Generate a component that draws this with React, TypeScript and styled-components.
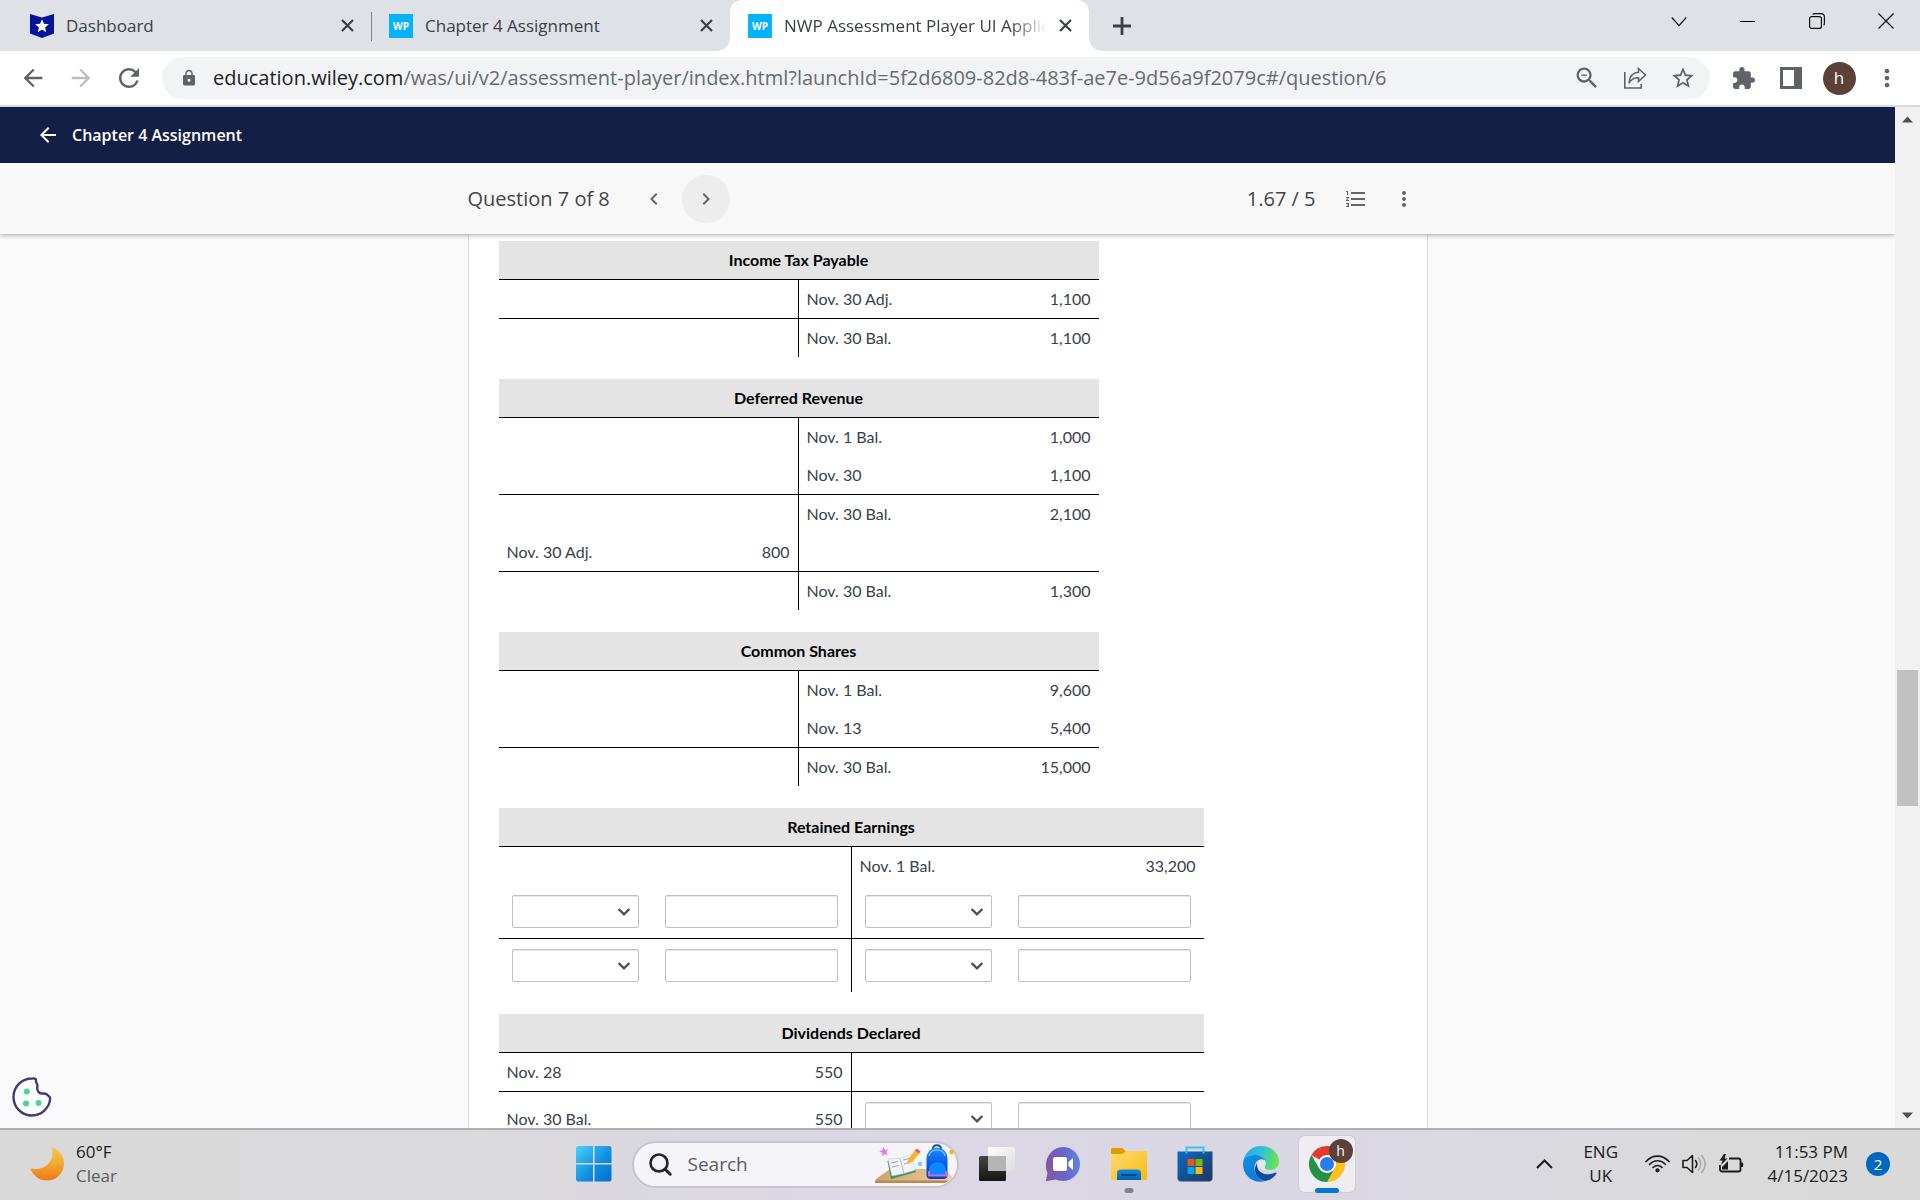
import React from "react";
import styled, { createGlobalStyle, css } from "styled-components";
import {
  MdArrowBack,
  MdArrowForward,
  MdRefresh,
  MdLock,
  MdZoomOut,
  MdStarBorder,
  MdExtension,
  MdMoreVert,
  MdChevronLeft,
  MdChevronRight,
  MdFormatListNumbered,
} from "react-icons/md";

const uiFont = `"Open Sans", "Noto Sans", sans-serif`;
const bodyFont = `Lato, "Open Sans", sans-serif`;

const GlobalStyle = createGlobalStyle`
  *, *::before, *::after { box-sizing: border-box; }
  body { margin: 0; font-family: ${uiFont}; }
  button, input, select { font: inherit; color: inherit; }
`;

const Screen = styled.div`
  display: flex;
  flex-direction: column;
  height: 100vh;
  overflow: hidden;
  background: #fff;
`;

const PlainButton = styled.button`
  display: flex;
  align-items: center;
  justify-content: center;
  flex: none;
  padding: 0;
  border: 0;
  background: none;
`;

/* ---------- browser tabs ---------- */

const TabStrip = styled.div`
  display: flex;
  flex: none;
  height: 51px;
  padding-left: 12px;
  background: #dee1e6;
`;

const Tab = styled.div<{ $active?: boolean; $divider?: boolean }>`
  position: relative;
  display: flex;
  align-items: center;
  flex: 0 1 359px;
  min-width: 0;
  padding: 0 12px 0 18px;
  color: #3c4043;
  ${(p) =>
    p.$divider &&
    css`
      &::after {
        content: "";
        position: absolute;
        right: -1px;
        top: 12px;
        width: 1px;
        height: 29px;
        background: #808489;
      }
    `}
  ${(p) =>
    p.$active &&
    css`
      background: #fff;
      border-radius: 12px 12px 0 0;
      &::before,
      &::after {
        content: "";
        position: absolute;
        bottom: 0;
        width: 12px;
        height: 12px;
      }
      &::before {
        left: -12px;
        background: radial-gradient(circle at 0 0, transparent 11px, #fff 12px);
      }
      &::after {
        right: -12px;
        background: radial-gradient(circle at 100% 0, transparent 11px, #fff 12px);
      }
    `}
`;

const TabTitle = styled.button<{ $fade?: boolean }>`
  flex: 1;
  min-width: 0;
  margin: 0 6px 0 12px;
  padding: 0;
  border: 0;
  background: none;
  font-size: 17px;
  line-height: 24px;
  text-align: left;
  white-space: nowrap;
  overflow: hidden;
  ${(p) =>
    p.$fade &&
    css`
      mask-image: linear-gradient(90deg, #000 calc(100% - 36px), transparent);
    `}
`;

const TabClose = styled(PlainButton)`
  width: 24px;
  height: 24px;
  color: #3c4043;
`;

const WpIcon = styled.span`
  display: flex;
  align-items: center;
  justify-content: center;
  flex: none;
  width: 24px;
  height: 24px;
  background: #06b1ff;
  color: #fff;
  font: 700 10px/24px "Open Sans", sans-serif;
`;

const NewTab = styled(PlainButton)`
  width: 42px;
  margin-left: 12px;
  color: #3c4043;
`;

const WindowControls = styled.div`
  display: flex;
  margin-left: auto;
  height: 42px;
`;

const WindowButton = styled(PlainButton)`
  width: 69px;
`;

/* ---------- address bar ---------- */

const Toolbar = styled.div`
  display: flex;
  align-items: center;
  flex: none;
  height: 56px;
  padding: 0 9px;
  background: #fff;
  border-bottom: 2px solid #d9dadd;
`;

const ToolButton = styled(PlainButton)<{ $dim?: boolean }>`
  width: 48px;
  height: 42px;
  color: ${(p) => (p.$dim ? "#bcbec1" : "#5f6368")};
`;

const AddressPill = styled.div`
  display: flex;
  align-items: center;
  flex: 1;
  min-width: 0;
  height: 42px;
  margin: 0 9px;
  padding: 0 3px 0 18px;
  border-radius: 21px;
  background: #f1f3f4;
  color: #5f6368;
`;

const Address = styled.div`
  flex: 1;
  min-width: 0;
  margin-left: 15px;
  font-size: 20px;
  line-height: 28px;
  color: #676b70;
  white-space: nowrap;
  overflow: hidden;
  b {
    font-weight: 400;
    color: #202124;
  }
`;

const Avatar = styled.span<{ $small?: boolean }>`
  display: flex;
  align-items: center;
  justify-content: center;
  width: ${(p) => (p.$small ? 24 : 33)}px;
  height: ${(p) => (p.$small ? 24 : 33)}px;
  border-radius: 50%;
  background: #5d4037;
  color: #fff;
  font-size: ${(p) => (p.$small ? 14 : 17)}px;
  line-height: 24px;
`;

/* ---------- page ---------- */

const Viewport = styled.div`
  display: flex;
  flex: 1;
  min-height: 0;
`;

const Page = styled.div`
  position: relative;
  display: flex;
  flex-direction: column;
  flex: 1;
  min-width: 0;
  overflow: hidden;
  background: #fafafa;
`;

const CourseBar = styled.header`
  display: flex;
  align-items: center;
  flex: none;
  height: 56px;
  padding-left: 36px;
  background: #131f45;
  color: #fff;
`;

const CourseTitle = styled.h1`
  margin: 0 0 0 12px;
  font-size: 16px;
  line-height: 24px;
  font-weight: 600;
`;

const QuestionBar = styled.div`
  position: relative;
  z-index: 1;
  flex: none;
  background: #f8f8f8;
  box-shadow: 0 1px 5px rgba(0, 0, 0, 0.35);
`;

const QuestionBarInner = styled.div`
  display: flex;
  align-items: center;
  max-width: 960px;
  height: 71px;
  margin: 0 auto;
  color: #444;
  font-size: 20px;
  line-height: 28px;
`;

const Pager = styled.div`
  display: flex;
  gap: 4px;
  margin-left: 20px;
`;

const RoundButton = styled(PlainButton)<{ $filled?: boolean }>`
  width: 48px;
  height: 48px;
  border-radius: 50%;
  background: ${(p) => (p.$filled ? "#ededed" : "none")};
  color: #666;
`;

const Score = styled.span`
  margin-left: auto;
  margin-right: 16px;
`;

const Scroller = styled.main`
  flex: 1;
  min-height: 0;
  overflow: hidden;
`;

const Sheet = styled.div`
  display: flex;
  flex-direction: column;
  align-items: flex-start;
  gap: 22px;
  max-width: 960px;
  margin: 0 auto;
  padding: 7px 30px 30px;
  background: #fff;
  border: solid #dcdcdc;
  border-width: 0 1px;
`;

const Account = styled.table<{ $wide?: boolean }>`
  width: ${(p) => (p.$wide ? 705 : 600)}px;
  table-layout: fixed;
  border-spacing: 0;
  font-family: ${bodyFont};
  font-size: 16px;
  line-height: 22px;
  color: #37424a;
`;

const AccountName = styled.th`
  height: 39px;
  padding: 8px;
  background: #e4e4e4;
  border-bottom: 1px solid #000;
  color: #000;
  font-weight: 700;
`;

const Cell = styled.td<{ $ruled?: boolean; $amount?: boolean; $stem?: boolean }>`
  height: ${(p) => (p.$ruled ? 39 : 38)}px;
  padding: 8px;
  text-align: ${(p) => (p.$amount ? "right" : "left")};
  border: 0 solid #000;
  border-bottom-width: ${(p) => (p.$ruled ? 1 : 0)}px;
  border-right-width: ${(p) => (p.$stem ? 1 : 0)}px;
`;

const FieldCell = styled(Cell)`
  padding: 10px 13px;
`;

const fieldBox = css`
  display: block;
  width: 100%;
  height: 33px;
  padding: 0 8px;
  border: 1px solid #bfc0c2;
  border-radius: 2px;
  background: #fff;
  box-shadow: inset 0 1px 1px rgba(0, 0, 0, 0.1);
`;

const AmountInput = styled.input`
  ${fieldBox}
`;

const Picker = styled.span`
  display: grid;
  align-items: center;
  > * {
    grid-area: 1 / 1;
  }
  svg {
    justify-self: end;
    margin-right: 8px;
    pointer-events: none;
  }
`;

const PickerSelect = styled.select`
  ${fieldBox}
  appearance: none;
`;

const CookieButton = styled(PlainButton)`
  position: absolute;
  left: 12px;
  bottom: 11px;
  width: 40px;
  height: 40px;
`;

const Scrollbar = styled.div`
  display: grid;
  grid-template-rows: 25px 538fr 136fr 297fr 25px;
  flex: none;
  width: 25px;
  background: #f1f1f1;
`;

const ScrollArrow = styled(PlainButton)<{ $down?: boolean }>`
  grid-row: ${(p) => (p.$down ? 5 : 1)};
`;

const ScrollThumb = styled.div`
  grid-row: 3;
  margin: 0 2px;
  background: #c1c1c1;
`;

/* ---------- taskbar ---------- */

const Taskbar = styled.footer`
  display: grid;
  grid-template-columns: 1fr auto 1fr;
  flex: none;
  height: 72px;
  padding-bottom: 2px;
  border-top: 2px solid #b0afb4;
  background: linear-gradient(90deg, #d9d9d9 0, #dad9dc 25%, #dbd7e4 45%, #dad7e4 68%, #dadadb 88%, #d9d9d9 100%);
  color: #1b1b1b;
  font-size: 17px;
  line-height: 24px;
`;

const Weather = styled.div`
  display: flex;
  align-items: center;
  gap: 12px;
  padding-left: 30px;
`;

const Muted = styled.div`
  color: #5c5c5c;
`;

const Apps = styled.div`
  display: flex;
  align-items: center;
  gap: 10px;
`;

const AppTile = styled(PlainButton)<{ $active?: boolean }>`
  position: relative;
  width: 56px;
  height: 56px;
  border-radius: 6px;
  ${(p) => p.$active && "background: #efecf4; box-shadow: 0 0 0 1px #cfccd8;"}
`;

const Running = styled.span<{ $active?: boolean }>`
  position: absolute;
  bottom: -1px;
  left: 50%;
  width: ${(p) => (p.$active ? 24 : 9)}px;
  height: 5px;
  border-radius: 3px;
  background: ${(p) => (p.$active ? "#0078d7" : "#84818b")};
  transform: translateX(-50%);
`;

const Badge = styled.span`
  position: absolute;
  top: 3px;
  right: 2px;
`;

const SearchPill = styled.label`
  display: flex;
  align-items: center;
  width: 327px;
  height: 47px;
  padding: 0 3px 0 15px;
  border: 2px solid #c6c4ce;
  border-radius: 24px;
  background: #f5f4f8;
`;

const SearchInput = styled.input`
  flex: 1;
  min-width: 0;
  margin-left: 16px;
  padding: 0;
  border: 0;
  background: none;
  font-size: 19px;
  line-height: 28px;
  &::placeholder {
    color: #5c5b60;
    opacity: 1;
  }
`;

const Tray = styled.div`
  display: flex;
  align-items: center;
  justify-content: flex-end;
  padding-right: 30px;
`;

const Language = styled.div`
  margin: 0 27px 0 30px;
  text-align: center;
`;

const TrayIcons = styled.div`
  display: flex;
  gap: 12px;
`;

const Clock = styled.div`
  width: 88px;
  margin: 0 18px 0 16px;
  text-align: right;
  white-space: nowrap;
`;

const Notices = styled(PlainButton)`
  width: 24px;
  height: 24px;
  border-radius: 50%;
  background: #0067c0;
  color: #fff;
  font-size: 15px;
`;

/* ---------- data ---------- */

type Side = [string, string] | "fields" | null;
type Entry = { left: Side; right: Side; ruled?: boolean };
type Ledger = { name: string; wide?: boolean; entries: Entry[] };

const ledgers: Ledger[] = [
  {
    name: "Income Tax Payable",
    entries: [
      { left: null, right: ["Nov. 30 Adj.", "1,100"], ruled: true },
      { left: null, right: ["Nov. 30 Bal.", "1,100"] },
    ],
  },
  {
    name: "Deferred Revenue",
    entries: [
      { left: null, right: ["Nov. 1 Bal.", "1,000"] },
      { left: null, right: ["Nov. 30", "1,100"], ruled: true },
      { left: null, right: ["Nov. 30 Bal.", "2,100"] },
      { left: ["Nov. 30 Adj.", "800"], right: null, ruled: true },
      { left: null, right: ["Nov. 30 Bal.", "1,300"] },
    ],
  },
  {
    name: "Common Shares",
    entries: [
      { left: null, right: ["Nov. 1 Bal.", "9,600"] },
      { left: null, right: ["Nov. 13", "5,400"], ruled: true },
      { left: null, right: ["Nov. 30 Bal.", "15,000"] },
    ],
  },
  {
    name: "Retained Earnings",
    wide: true,
    entries: [
      { left: null, right: ["Nov. 1 Bal.", "33,200"] },
      { left: "fields", right: "fields", ruled: true },
      { left: "fields", right: "fields" },
    ],
  },
  {
    name: "Dividends Declared",
    wide: true,
    entries: [
      { left: ["Nov. 28", "550"], right: null, ruled: true },
      { left: ["Nov. 30 Bal.", "550"], right: "fields" },
    ],
  },
];

function SideCells({ side, stem, ruled, label }: { side: Side; stem?: boolean; ruled?: boolean; label: string }) {
  if (side === "fields") {
    return (
      <>
        <FieldCell $ruled={ruled}>
          <Picker>
            <PickerSelect aria-label={`${label} date`}>
              <option value="" />
              <option>Nov. 30</option>
              <option>Nov. 30 Bal.</option>
            </PickerSelect>
            <svg width="14" height="10" viewBox="0 0 14 10">
              <path d="M1.6 2l5.4 5.4L12.4 2" fill="none" stroke="#505050" strokeWidth="2.4" />
            </svg>
          </Picker>
        </FieldCell>
        <FieldCell $ruled={ruled} $stem={stem}>
          <AmountInput aria-label={`${label} amount`} />
        </FieldCell>
      </>
    );
  }
  return (
    <>
      <Cell $ruled={ruled}>{side?.[0]}</Cell>
      <Cell $ruled={ruled} $amount $stem={stem}>
        {side?.[1]}
      </Cell>
    </>
  );
}

function AccountTable({ ledger }: { ledger: Ledger }) {
  const columns = ledger.wide ? [153, 200, 153, 199] : [150, 150, 150, 150];
  return (
    <Account $wide={ledger.wide}>
      <colgroup>
        {columns.map((width, i) => (
          <col key={i} style={{ width }} />
        ))}
      </colgroup>
      <thead>
        <tr>
          <AccountName colSpan={4}>{ledger.name}</AccountName>
        </tr>
      </thead>
      <tbody>
        {ledger.entries.map((e, i) => (
          <tr key={i}>
            <SideCells side={e.left} stem ruled={e.ruled} label={`${ledger.name} debit ${i}`} />
            <SideCells side={e.right} ruled={e.ruled} label={`${ledger.name} credit ${i}`} />
          </tr>
        ))}
      </tbody>
    </Account>
  );
}

/* ---------- drawings ---------- */

const CrossIcon = () => (
  <svg width="13" height="13" viewBox="0 0 13 13">
    <path d="M1 1l11 11M12 1L1 12" stroke="#3c4043" strokeWidth="2.200" />
  </svg>
);

const PlusIcon = () => (
  <svg width="18" height="18" viewBox="0 0 18 18">
    <path d="M9 0v18M0 9h18" stroke="#3c4043" strokeWidth="2.800" />
  </svg>
);

const DashboardIcon = () => (
  <svg width="24" height="24" viewBox="0 0 24 24">
    <path d="M0 0l12 3.400L24 0v19.500L12 24 0 19.500z" fill="#04149a" />
    <path d="M12 5.200l1.900 4.600 4.900.4-3.700 3.200 1.100 4.800-4.200-2.600-4.200 2.600 1.100-4.800-3.700-3.200 4.900-.4z" fill="#fff" />
  </svg>
);

const ShareIcon = () => (
  <svg width="24" height="24" viewBox="0 0 24 24" fill="none" stroke="#5f6368" strokeWidth="1.600">
    <path d="M1.800 6v16h16.400v-4" />
    <path d="M15.500 2.500v3.700C9.500 6.600 6.500 10 6 17c2-3.700 5-5.300 9.500-5.300v3.800L22.500 9z" strokeLinejoin="miter" />
  </svg>
);

const SidePanelIcon = () => (
  <svg width="22" height="22" viewBox="0 0 22 22">
    <path d="M0 0h22v22H0zM3 3v16h11V3z" fill="#5f6368" fillRule="evenodd" />
  </svg>
);

const CookieIcon = () => (
  <svg width="40" height="40" viewBox="0 0 40 40">
    <path
      d="M20 1.500c1.500-.2 3 0 3.800.7.500 1.800-.3 2.800 1 4.300 1.300 1.500.2 3 .4 5 .3 3.500 2.500 5.500 5.800 5 2.500-.3 3.500.2 4.500 1.500 1.200.8 2.500 1.500 2.700 3.500C37.500 30.500 30 38.500 20 38.500 9.700 38.500 1.500 30.300 1.500 20S9.700 1.500 20 1.500z"
      fill="#fff"
      stroke="#403a78"
      strokeWidth="2.400"
    />
    <g fill="#47d59c">
      <circle cx="14.800" cy="14.500" r="3" />
      <circle cx="14" cy="26.500" r="3" />
      <circle cx="26.600" cy="26" r="3" />
    </g>
  </svg>
);

const MoonIcon = () => (
  <svg width="34" height="34" viewBox="0 0 34 34">
    <defs>
      <linearGradient id="moon" x1="0" y1="0" x2="0" y2="1">
        <stop offset="0" stopColor="#f7c948" />
        <stop offset="0.500" stopColor="#f3a92f" />
        <stop offset="1" stopColor="#f0761a" />
      </linearGradient>
    </defs>
    <path d="M22 0c7.500 3 12 9.500 12 16.500C34 26 26.500 33.500 17 33.500 9.500 33.500 3 29 .5 21.500c12 2.500 25-4.500 21.500-21.500z" fill="url(#moon)" />
  </svg>
);

const WindowsIcon = () => (
  <svg width="36" height="36" viewBox="0 0 36 36">
    <defs>
      <linearGradient id="win" x1="0" y1="0" x2="1" y2="1">
        <stop offset="0" stopColor="#4cd0ff" />
        <stop offset="0.550" stopColor="#1390df" />
        <stop offset="1" stopColor="#0070cc" />
      </linearGradient>
    </defs>
    <path d="M1.500 0H17v17H0V1.500zM18.500 0H34l1.500 1.500V17h-17zM0 18.500h17v17H1.500L0 34zM18.500 18.500h17V34l-1.500 1.500H18.500z" fill="url(#win)" />
  </svg>
);

const SearchIcon = () => (
  <svg width="23" height="23" viewBox="0 0 23 23" fill="none" stroke="#242424" strokeWidth="2.600" strokeLinecap="round">
    <circle cx="10" cy="10" r="8.500" />
    <path d="M16.200 16.200l5 5" strokeWidth="3" />
  </svg>
);

const SchoolArt = () => (
  <svg width="79" height="40" viewBox="0 0 79 40">
    <defs>
      <linearGradient id="bag" x1="0" y1="0" x2="0" y2="1">
        <stop offset="0" stopColor="#1b8cff" />
        <stop offset="0.500" stopColor="#0a5be8" />
        <stop offset="1" stopColor="#123f9e" />
      </linearGradient>
      <linearGradient id="desk" x1="0" y1="0" x2="1" y2="0">
        <stop offset="0" stopColor="#cfa06c" />
        <stop offset="1" stopColor="#eccf9f" />
      </linearGradient>
    </defs>
    <path d="M15 25h55l8 9-7 4H1v-3z" fill="url(#desk)" />
    <path d="M0 36.500h74l-4 2.500H0z" fill="#b78a55" />
    <path d="M8.500 3l1.600 3 3-.6-1.600 2.700 1.200 2.800-3-.6-2.700 1.700.2-3.200-3-1.600 3-1z" fill="#e77af5" />
    <path d="M12.500 17l3.500 18 25-7-1-4-23 6-3-14z" fill="#2f9a58" />
    <path d="M13 15l12-.5L36 10l4.500 16-12 3.500L17 32z" fill="#f4f5fb" stroke="#c9cbd8" strokeWidth="0.600" />
    <path d="M25 14.500l4 15" stroke="#b3b6c6" strokeWidth="1" />
    <path d="M16 19l7-1.500M17 23l7-1.500M28 16l6-1.500M29 20l6-1.500" stroke="#9da0b5" strokeWidth="1" />
    <path d="M32 20l1.500-5.500L40.500 6l4 3-7 9z" fill="#f9b233" />
    <path d="M40 6.500l1.500-2 4 2.800-1.500 2.200z" fill="#f0574a" />
    <circle cx="45" cy="20" r="2.200" fill="#6bd3e6" />
    <circle cx="76.500" cy="8" r="2.200" fill="#ffb000" />
    <path d="M58 5c0-5 8-5 8 0" fill="none" stroke="#184fa8" strokeWidth="2" />
    <path d="M51.500 15C51.500 0 72.500 0 72.500 15v16c0 2.500-1.500 4-4 4h-13c-2.500 0-4-1.500-4-4z" fill="url(#bag)" />
    <path d="M54 12c1-8 15-8 16 0" fill="none" stroke="#74c7ff" strokeWidth="1.500" />
    <path d="M54 27c0-12 17-12 17 0v5H54z" fill="#0e86ff" />
    <path d="M54 27v4.500h17V27" fill="none" stroke="#c06cf0" strokeWidth="2" />
  </svg>
);

const TaskViewIcon = () => (
  <svg width="36" height="36" viewBox="0 0 36 36">
    <defs>
      <linearGradient id="tvDark" x1="0" y1="0" x2="0" y2="1">
        <stop offset="0" stopColor="#454545" />
        <stop offset="1" stopColor="#151515" />
      </linearGradient>
      <linearGradient id="tvLight" x1="0" y1="0" x2="1" y2="1">
        <stop offset="0" stopColor="#fff" />
        <stop offset="1" stopColor="#dcdcdc" />
      </linearGradient>
    </defs>
    <rect x="0" y="10" width="27" height="25" rx="1.500" fill="url(#tvDark)" />
    <rect x="9" y="1" width="27" height="24" rx="1.500" fill="url(#tvLight)" />
    <path d="M9 10h18v15H10.500L9 23.500z" fill="#b4b4b4" />
  </svg>
);

const ChatIcon = () => (
  <svg width="36" height="36" viewBox="0 0 36 36">
    <defs>
      <linearGradient id="chat" x1="0" y1="0.400" x2="1" y2="0.300">
        <stop offset="0" stopColor="#84589e" />
        <stop offset="0.500" stopColor="#6a63c8" />
        <stop offset="1" stopColor="#5b86e8" />
      </linearGradient>
    </defs>
    <path d="M18 1C27.500 1 35 8.600 35 18S27.500 35 18 35c-3 0-5.600-.8-7.500-1.500L.8 35.200 2.500 27C-3 15 6 1 18 1z" fill="url(#chat)" />
    <rect x="8" y="11" width="14" height="14" rx="2" fill="#fff" />
    <path d="M23.500 16l4.500-4v12l-4.500-4z" fill="#fff" />
  </svg>
);

const FolderIcon = () => (
  <svg width="36" height="36" viewBox="0 0 36 36">
    <defs>
      <linearGradient id="folder" x1="0" y1="0" x2="1" y2="1">
        <stop offset="0" stopColor="#ffdc70" />
        <stop offset="1" stopColor="#f8ba12" />
      </linearGradient>
      <linearGradient id="folderTab" x1="0" y1="0" x2="0" y2="1">
        <stop offset="0" stopColor="#1389dd" />
        <stop offset="1" stopColor="#0561ac" />
      </linearGradient>
    </defs>
    <path d="M0 3.500C0 2.500.7 2 1.500 2H11l4 3.500V10H0z" fill="#e09c00" />
    <path d="M0 8h11l4.500-3H34.500c1 0 1.500.6 1.500 1.500V34H0z" fill="url(#folder)" />
    <path d="M6 34v-7c0-2 1.500-3.500 3.500-3.500h17c2 0 3.500 1.500 3.500 3.500v7z" fill="url(#folderTab)" />
    <path d="M11 28.800h14" stroke="#083e72" strokeWidth="1.800" strokeLinecap="round" />
  </svg>
);

const StoreIcon = () => (
  <svg width="36" height="36" viewBox="0 0 36 36">
    <defs>
      <linearGradient id="store" x1="0" y1="0" x2="1" y2="1">
        <stop offset="0" stopColor="#0a6cc2" />
        <stop offset="1" stopColor="#22355e" />
      </linearGradient>
    </defs>
    <path d="M9.500 7V1.500h17V7" fill="none" stroke="#32c8f4" strokeWidth="2" />
    <path d="M.5 5.500h35V32c0 2.200-1.500 3.500-3.500 3.500H4C2 35.500.5 34.200.5 32z" fill="url(#store)" />
    <rect x="10.500" y="13" width="7" height="7" fill="#f25022" />
    <rect x="18.500" y="13" width="7" height="7" fill="#7fba00" />
    <rect x="10.500" y="21" width="7" height="7" fill="#00a4ef" />
    <rect x="18.500" y="21" width="7" height="7" fill="#ffb900" />
    <path d="M9.500 5.500V7.500M26.500 5.500V7.500" stroke="#32c8f4" strokeWidth="2" />
  </svg>
);

const EdgeIcon = () => (
  <svg width="36" height="36" viewBox="0 0 36 36">
    <defs>
      <linearGradient id="edgeTop" x1="0" y1="0.300" x2="1" y2="0.500">
        <stop offset="0" stopColor="#2aa9ee" />
        <stop offset="0.500" stopColor="#2fc2d6" />
        <stop offset="1" stopColor="#6be64a" />
      </linearGradient>
      <linearGradient id="edgeLeft" x1="0" y1="0" x2="0.400" y2="1">
        <stop offset="0" stopColor="#128fd8" />
        <stop offset="1" stopColor="#0f7be0" />
      </linearGradient>
    </defs>
    <path d="M0 17C1 7 8.500 0 18 0c10.500 0 18 7.500 18 15.500 0 5-3.800 8.500-8.500 8.500-4 0-6-1.400-6-2.700 0-.8 1.400-1.700 1.400-4 0-4.500-5-8.300-11.400-8.300C5.500 9 1.500 12.500 0 17z" fill="url(#edgeTop)" />
    <path d="M0 18c0-5.500 5-9 11.500-9 5.500 0 9.500 2.500 11 5.500-6-3.500-11 1-11 8 0 6 4.500 12 11 12.500C10 38.500 0 29.500 0 18z" fill="url(#edgeLeft)" />
    <path d="M14.300 16.800C9 24 13 33.500 22.500 35c5-.8 9-4.200 11-7.500.4-.8-.3-1.200-1-.9-8 3.700-20 1.200-18.200-9.800z" fill="#0c4f9e" />
    <path d="M14.200 17.500c.5-2.800 3.800-4.500 6.500-3.200 2.400 1.300 2.500 4 1 6.500-.7 1.500.8 2.300 1.300 2.500-5 1-9.300-1.500-8.800-5.800z" fill="#e4e6ef" />
  </svg>
);

const ChromeIcon = () => (
  <svg width="36" height="36" viewBox="0 0 36 36">
    <path d="M18 18L2.400 9A18 18 0 0 1 33.600 9z" fill="#e33b2e" />
    <path d="M18 9h15.600A18 18 0 0 1 18 36l7.800-13.500z" fill="#fcc21b" />
    <path d="M10.200 22.500L2.400 9A18 18 0 0 0 18 36l7.800-13.500z" fill="#229342" />
    <circle cx="18" cy="18" r="9" fill="#fff" />
    <circle cx="18" cy="18" r="7" fill="#2a7bee" />
  </svg>
);

const WifiIcon = () => (
  <svg width="25" height="19" viewBox="0 0 25 19" fill="none" stroke="#1c1c1c" strokeWidth="1.700" strokeLinecap="round">
    <path d="M1 7.500C7.500.2 17.500.2 24 7.500" />
    <path d="M4.500 10.500c4.700-5 11.300-5 16 0" />
    <path d="M8 13.500c2.700-2.700 6.300-2.700 9 0" />
    <circle cx="12.500" cy="16.300" r="1.300" fill="#1c1c1c" />
  </svg>
);

const SpeakerIcon = () => (
  <svg width="25" height="20" viewBox="0 0 25 20" fill="none" stroke="#1c1c1c" strokeWidth="1.600" strokeLinecap="round" strokeLinejoin="round">
    <path d="M1 6.500h4L10.500 1.500v17L5 13.500H1z" />
    <path d="M13.500 6.500c1.500 2 1.500 5 0 7" />
    <path d="M16.500 4c3 3.500 3 8.500 0 12M19.500 1.500c4.700 5 4.700 12 0 17" stroke="#a9a9ab" />
  </svg>
);

const BatteryIcon = () => (
  <svg width="25" height="20" viewBox="0 0 25 20">
    <path d="M10 4.500h9.500a2 2 0 0 1 2 2v9a2 2 0 0 1-2 2H3a2 2 0 0 1-2-2V11" fill="none" stroke="#1c1c1c" strokeWidth="1.800" />
    <path d="M22 8.500h1.500c1 0 1 4.500 0 4.500H22z" fill="#1c1c1c" />
    <path d="M5 0L.5 6.500h3L2 11l6.500-6.500h-3L7 0zM3 15.500V13l6-6v8.500z" fill="#1c1c1c" />
  </svg>
);

/* ---------- app ---------- */

export default function App() {
  return (
    <Screen>
      <GlobalStyle />
      <TabStrip>
        <Tab $divider>
          <DashboardIcon />
          <TabTitle>Dashboard</TabTitle>
          <TabClose aria-label="Close tab"><CrossIcon /></TabClose>
        </Tab>
        <Tab>
          <WpIcon>WP</WpIcon>
          <TabTitle>Chapter 4 Assignment</TabTitle>
          <TabClose aria-label="Close tab"><CrossIcon /></TabClose>
        </Tab>
        <Tab $active>
          <WpIcon>WP</WpIcon>
          <TabTitle $fade>NWP Assessment Player UI Application</TabTitle>
          <TabClose aria-label="Close tab"><CrossIcon /></TabClose>
        </Tab>
        <NewTab aria-label="New tab"><PlusIcon /></NewTab>
        <WindowControls>
          <WindowButton aria-label="Search tabs">
            <svg width="16" height="11" viewBox="0 0 16 11"><path d="M.8 1.500L8 9.700l7.200-8.200" fill="none" stroke="#111" strokeWidth="1.200" /></svg>
          </WindowButton>
          <WindowButton aria-label="Minimize">
            <svg width="15" height="1"><path d="M0 .5h15" stroke="#000" /></svg>
          </WindowButton>
          <WindowButton aria-label="Restore">
            <svg width="16" height="16" viewBox="0 0 16 16" fill="none" stroke="#111" strokeWidth="1.200">
              <rect x=".6" y="3.600" width="11.800" height="11.800" rx="2" />
              <path d="M3.600 1.200C4.200.7 5 .6 6 .6h6c2 0 3.400 1.400 3.400 3.400v6c0 1-.2 1.800-.8 2.400" />
            </svg>
          </WindowButton>
          <WindowButton aria-label="Close window">
            <svg width="16" height="16" viewBox="0 0 16 16"><path d="M.5.5l15 15M15.500.5l-15 15" stroke="#111" strokeWidth="1.200" /></svg>
          </WindowButton>
        </WindowControls>
      </TabStrip>

      <Toolbar>
        <ToolButton aria-label="Back"><MdArrowBack size={28} /></ToolButton>
        <ToolButton aria-label="Forward" $dim><MdArrowForward size={28} /></ToolButton>
        <ToolButton aria-label="Reload"><MdRefresh size={30} /></ToolButton>
        <AddressPill>
          <MdLock size={18} />
          <Address role="textbox" tabIndex={0} aria-label="Address">
            <b>education.wiley.com</b>/was/ui/v2/assessment-player/index.html?launchId=5f2d6809-82d8-483f-ae7e-9d56a9f2079c#/question/6
          </Address>
          <ToolButton aria-label="Zoom"><MdZoomOut size={28} /></ToolButton>
          <ToolButton aria-label="Share"><ShareIcon /></ToolButton>
          <ToolButton aria-label="Bookmark"><MdStarBorder size={26} /></ToolButton>
        </AddressPill>
        <ToolButton aria-label="Extensions"><MdExtension size={25} /></ToolButton>
        <ToolButton aria-label="Side panel"><SidePanelIcon /></ToolButton>
        <ToolButton aria-label="Profile"><Avatar>h</Avatar></ToolButton>
        <ToolButton aria-label="Menu"><MdMoreVert size={28} /></ToolButton>
      </Toolbar>

      <Viewport>
        <Page>
          <CourseBar>
            <PlainButton aria-label="Back to course"><MdArrowBack size={24} /></PlainButton>
            <CourseTitle>Chapter 4 Assignment</CourseTitle>
          </CourseBar>
          <QuestionBar>
            <QuestionBarInner>
              <span>Question 7 of 8</span>
              <Pager>
                <RoundButton aria-label="Previous question"><MdChevronLeft size={24} /></RoundButton>
                <RoundButton aria-label="Next question" $filled><MdChevronRight size={24} /></RoundButton>
              </Pager>
              <Score>1.67 / 5</Score>
              <RoundButton aria-label="Question list"><MdFormatListNumbered size={24} /></RoundButton>
              <RoundButton aria-label="More options"><MdMoreVert size={24} /></RoundButton>
            </QuestionBarInner>
          </QuestionBar>
          <Scroller>
            <Sheet>
              {ledgers.map((l) => (
                <AccountTable key={l.name} ledger={l} />
              ))}
            </Sheet>
          </Scroller>
          <CookieButton aria-label="Cookie settings"><CookieIcon /></CookieButton>
        </Page>
        <Scrollbar>
          <ScrollArrow aria-label="Scroll up"><svg width="11" height="7"><path d="M0 6.500L5.500.5l5.500 6z" fill="#505050" /></svg></ScrollArrow>
          <ScrollThumb />
          <ScrollArrow aria-label="Scroll down" $down><svg width="11" height="7"><path d="M0 .5l5.500 6 5.500-6z" fill="#505050" /></svg></ScrollArrow>
        </Scrollbar>
      </Viewport>

      <Taskbar>
        <Weather>
          <MoonIcon />
          <div>
            <div>60°F</div>
            <Muted>Clear</Muted>
          </div>
        </Weather>
        <Apps>
          <AppTile aria-label="Start"><WindowsIcon /></AppTile>
          <SearchPill>
            <SearchIcon />
            <SearchInput placeholder="Search" aria-label="Search" />
            <SchoolArt />
          </SearchPill>
          <AppTile aria-label="Task view"><TaskViewIcon /></AppTile>
          <AppTile aria-label="Chat"><ChatIcon /></AppTile>
          <AppTile aria-label="File Explorer"><FolderIcon /><Running /></AppTile>
          <AppTile aria-label="Store"><StoreIcon /></AppTile>
          <AppTile aria-label="Edge"><EdgeIcon /></AppTile>
          <AppTile aria-label="Chrome" $active>
            <ChromeIcon />
            <Badge><Avatar $small>h</Avatar></Badge>
            <Running $active />
          </AppTile>
        </Apps>
        <Tray>
          <PlainButton aria-label="Hidden icons">
            <svg width="17" height="10" viewBox="0 0 17 10"><path d="M1 9l7.500-7.500L16 9" fill="none" stroke="#1c1c1c" strokeWidth="2" /></svg>
          </PlainButton>
          <Language>
            <div>ENG</div>
            <div>UK</div>
          </Language>
          <TrayIcons>
            <WifiIcon />
            <SpeakerIcon />
            <BatteryIcon />
          </TrayIcons>
          <Clock>
            <div>11:53 PM</div>
            <div>4/15/2023</div>
          </Clock>
          <Notices aria-label="2 notifications">2</Notices>
        </Tray>
      </Taskbar>
    </Screen>
  );
}
